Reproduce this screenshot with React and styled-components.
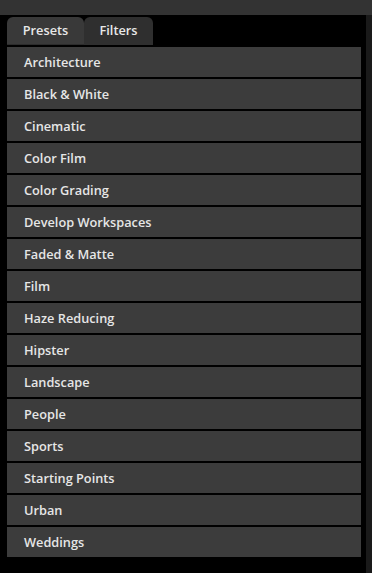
import React, { useState } from "react";
import styled, { createGlobalStyle } from "styled-components";

const GlobalStyle = createGlobalStyle`
    html, body {
        margin: 0;
        padding: 0;
        background: #000;
    }
    body {
        font-family: "Open Sans", "Lato", sans-serif;
    }
`;

const Page = styled.div`
    width: 372px;
    height: 573px;
    display: flex;
    flex-direction: column;
    background: #000;
    overflow: hidden;
`;

const TopBar = styled.div`
    height: 15px;
    background: #333;
    flex-shrink: 0;
`;

const Body = styled.div`
    flex: 1;
    display: flex;
`;

const Panel = styled.div`
    flex: 1;
    padding: 2px 5px 0 7px;
    display: flex;
    flex-direction: column;
`;

const Track = styled.div`
    width: 6px;
    background: #1a1a1a;
`;

const Tabs = styled.div`
    display: flex;
    height: 28px;
    margin-bottom: 2px;
`;

const Tab = styled.div`
    width: ${(p) => p.$width}px;
    display: flex;
    align-items: center;
    justify-content: center;
    padding-bottom: 1px;
    box-sizing: border-box;
    background: ${(p) => (p.$active ? "#393939" : "#2f2f2f")};
    border-radius: 6px 6px 0 0;
    border-bottom: 1px solid ${(p) => (p.$active ? "#2c2c2c" : "#2f2f2f")};
    color: #e8e8e8;
    font-size: 12.75px;
    font-weight: 600;
    cursor: pointer;
`;

const List = styled.div`
    display: flex;
    flex-direction: column;
    gap: 2px;
`;

const Row = styled.div`
    height: 30px;
    box-sizing: border-box;
    display: flex;
    align-items: center;
    padding: 0 0 1px 17px;
    background: #3c3c3c;
    color: #e6e6e6;
    font-size: 12.75px;
    font-weight: 600;
`;

const presets = [
    "Architecture",
    "Black & White",
    "Cinematic",
    "Color Film",
    "Color Grading",
    "Develop Workspaces",
    "Faded & Matte",
    "Film",
    "Haze Reducing",
    "Hipster",
    "Landscape",
    "People",
    "Sports",
    "Starting Points",
    "Urban",
    "Weddings",
];

export default function App() {
    const [tab, setTab] = useState("presets");

    return (
        <Page>
            <GlobalStyle />
            <TopBar />
            <Body>
                <Panel>
                    <Tabs>
                        <Tab $width={77} $active={tab === "presets"} onClick={() => setTab("presets")}>
                            Presets
                        </Tab>
                        <Tab $width={69} $active={tab === "filters"} onClick={() => setTab("filters")}>
                            Filters
                        </Tab>
                    </Tabs>
                    <List>
                        {presets.map((name) => (
                            <Row key={name}>{name}</Row>
                        ))}
                    </List>
                </Panel>
                <Track />
            </Body>
        </Page>
    );
}
